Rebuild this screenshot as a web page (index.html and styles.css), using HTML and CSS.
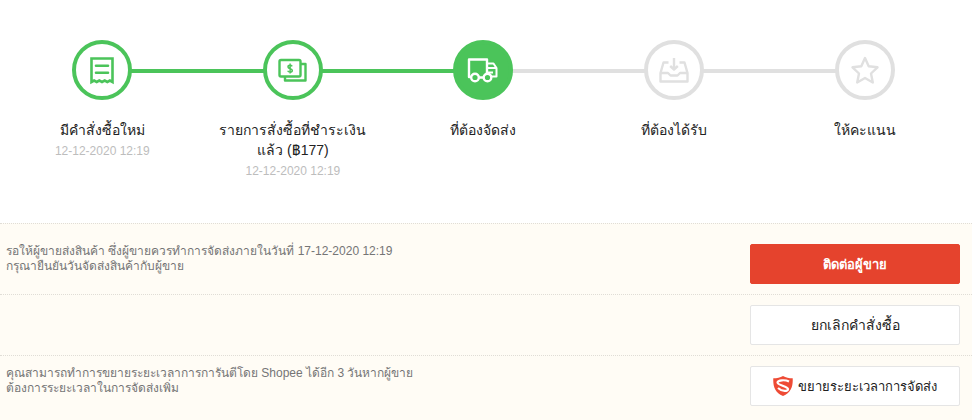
FILE: index.html
```html
<!DOCTYPE html>
<html lang="th">
<head>
  <meta charset="utf-8">
  <title>Shopee</title>
  <link rel="stylesheet" href="styles.css">
</head>
<body>
  <ol class="stepper">
    <li class="step done">
      <div class="step-icon">
        <svg width="32" height="32" viewBox="0 0 32 32" fill="none" stroke="currentColor" stroke-width="2.6">
          <path d="M5.500 28V4.500h21V28l-2.600-1.500-2.600 1.500-2.600-1.500-2.700 1.500-2.700-1.500-2.600 1.500-2.600-1.500z"/>
          <path d="M10 11.800h12M10 18.700h12" stroke-linecap="round"/>
        </svg>
      </div>
      <div class="step-title">มีคำสั่งซื้อใหม่</div>
      <div class="step-date">12-12-2020 12:19</div>
    </li>
    <li class="step done">
      <div class="step-icon">
        <svg width="32" height="32" viewBox="0 0 32 32" fill="none" stroke="currentColor" stroke-width="2.4">
          <rect x="2.500" y="6" width="21" height="16.500" rx="1.500"/>
          <path d="M24 10h4.500v16.500h-20.500v-3.500" stroke-linejoin="round"/>
          <path d="M15.200 12.300c-.5-.8-1.200-1-2.200-1-1.200 0-2 .6-2 1.600 0 2.400 4.300 1.200 4.300 3.500 0 1-.9 1.600-2.200 1.600-1.200 0-2-.4-2.400-1.300M13.100 9.500v10" stroke-width="1.500"/>
        </svg>
      </div>
      <div class="step-title">รายการสั่งซื้อที่ชำระเงิน<br>แล้ว (฿177)</div>
      <div class="step-date">12-12-2020 12:19</div>
    </li>
    <li class="step current">
      <div class="step-icon">
        <svg width="32" height="32" viewBox="0 0 32 32" fill="none" stroke="currentColor" stroke-width="2.4" stroke-linejoin="round">
          <path d="M4 23H2V5.500h18V19M12 23.500h4"/>
          <path d="M20 9.500h6.500l3 4.500v8.500h-5M21 14h8.500M21 18.500h5" stroke-width="2"/>
          <circle cx="8" cy="23.500" r="3.800"/>
          <circle cx="20.500" cy="23.500" r="3.800"/>
        </svg>
      </div>
      <div class="step-title">ที่ต้องจัดส่ง</div>
    </li>
    <li class="step">
      <div class="step-icon">
        <svg width="32" height="32" viewBox="0 0 32 32" fill="none" stroke="currentColor" stroke-width="2.4" stroke-linejoin="round">
          <path d="M10.500 8.500H5.500L2.500 19v8.500h27V19l-3-10.500h-5"/>
          <path d="M3 19h7l2.500 2.500h7L22 19h7"/>
          <path d="M16 4v11M12.200 12l3.800 3.500 3.800-3.500"/>
        </svg>
      </div>
      <div class="step-title">ที่ต้องได้รับ</div>
    </li>
    <li class="step">
      <div class="step-icon">
        <svg width="32" height="32" viewBox="0 0 32 32" fill="none" stroke="currentColor" stroke-width="2.4" stroke-linejoin="round">
          <path d="M16 4l3.700 8.300 8.800 1-6.500 6.200 1.800 9L16 24l-7.800 4.500 1.800-9-6.500-6.200 8.800-1z"/>
        </svg>
      </div>
      <div class="step-title">ให้คะแนน</div>
    </li>
  </ol>

  <div class="action-row action-row-first">
    <p class="action-text">รอให้ผู้ขายส่งสินค้า ซึ่งผู้ขายควรทำการจัดส่งภายในวันที่ 17-12-2020 12:19<br>กรุณายืนยันวันจัดส่งสินค้ากับผู้ขาย</p>
    <button type="button" class="btn btn-primary">ติดต่อผู้ขาย</button>
  </div>
  <div class="action-row">
    <button type="button" class="btn">ยกเลิกคำสั่งซื้อ</button>
  </div>
  <div class="action-row action-row-last">
    <p class="action-text">คุณสามารถทำการขยายระยะเวลาการการันตีโดย Shopee ได้อีก 3 วันหากผู้ขาย<br>ต้องการระยะเวลาในการจัดส่งเพิ่ม</p>
    <button type="button" class="btn btn-extend">
      <svg width="20" height="20" viewBox="0 0 20 20" fill="none">
        <path d="M10 0c2.800 1.600 6 2.300 9.700 2.300.4 8.200-1.500 14.200-9.700 17.700C1.800 16.500-.1 10.500.3 2.300 4 2.300 7.200 1.600 10 0z" fill="#ee4b35"/>
        <path d="M16 5.500C12 3.500 5 4 4.500 6.500c-.4 2.400 10 4 10.500 6.500.2 2.400-5.600 3-10-1" stroke="#fff" stroke-width="2.200"/>
      </svg>
      ขยายระยะเวลาการจัดส่ง
    </button>
  </div>
</body>
</html>
```
FILE: styles.css
```css
body {
  margin: 0;
  background-color: #fff;
  color: #222;
  font-family: "Liberation Sans", Arial, sans-serif;
  font-size: 14px;
}

/* order progress */
.stepper {
  display: flex;
  margin: 0;
  padding: 40px 12px 42px 7px;
  list-style: none;
}
.step {
  position: relative;
  flex: 1;
  display: flex;
  flex-direction: column;
  align-items: center;
  text-align: center;
  line-height: 20px;
}
.step + .step::before {
  content: "";
  position: absolute;
  top: 29px;
  right: 50%;
  width: 100%;
  height: 4px;
  background-color: #e0e0e0;
}
.step + .done::before,
.step + .current::before {
  background-color: #4bc45a;
}
.step-icon {
  position: relative;
  z-index: 1;
  box-sizing: border-box;
  display: flex;
  align-items: center;
  justify-content: center;
  width: 60px;
  height: 60px;
  margin-bottom: 20px;
  border: 4px solid #e0e0e0;
  border-radius: 50%;
  background-color: #fff;
  color: #e0e0e0;
}
.done .step-icon {
  border-color: #4bc45a;
  color: #4bc45a;
}
.current .step-icon {
  border-color: #4bc45a;
  background-color: #4bc45a;
  color: #fff;
}
.step-date {
  padding-top: 1px;
  color: #bdbdbd;
  font-size: 12px;
}

/* actions */
.action-row {
  display: flex;
  align-items: flex-start;
  padding: 10px 12px 10px 6px;
  border-top: 1px dotted #e0ddd6;
  background-color: #fffcf5;
}
.action-row-first {
  padding-top: 20px;
}
.action-row-last {
  padding-bottom: 14px;
}
.action-text {
  margin: 0;
  color: #757575;
  font-size: 12px;
  line-height: 15px;
}
.btn {
  flex: none;
  display: flex;
  align-items: center;
  justify-content: center;
  gap: 5px;
  width: 210px;
  height: 40px;
  margin-left: auto;
  padding: 0;
  border: 1px solid #e5e5e5;
  border-radius: 2px;
  background-color: #fff;
  color: #222;
  font-family: inherit;
  font-size: 14px;
  cursor: pointer;
}
.btn-primary {
  border-color: #e5432d;
  background-color: #e5432d;
  color: #fff;
  font-size: 13px;
  font-weight: bold;
}
.btn-extend {
  font-size: 13px;
}
```
